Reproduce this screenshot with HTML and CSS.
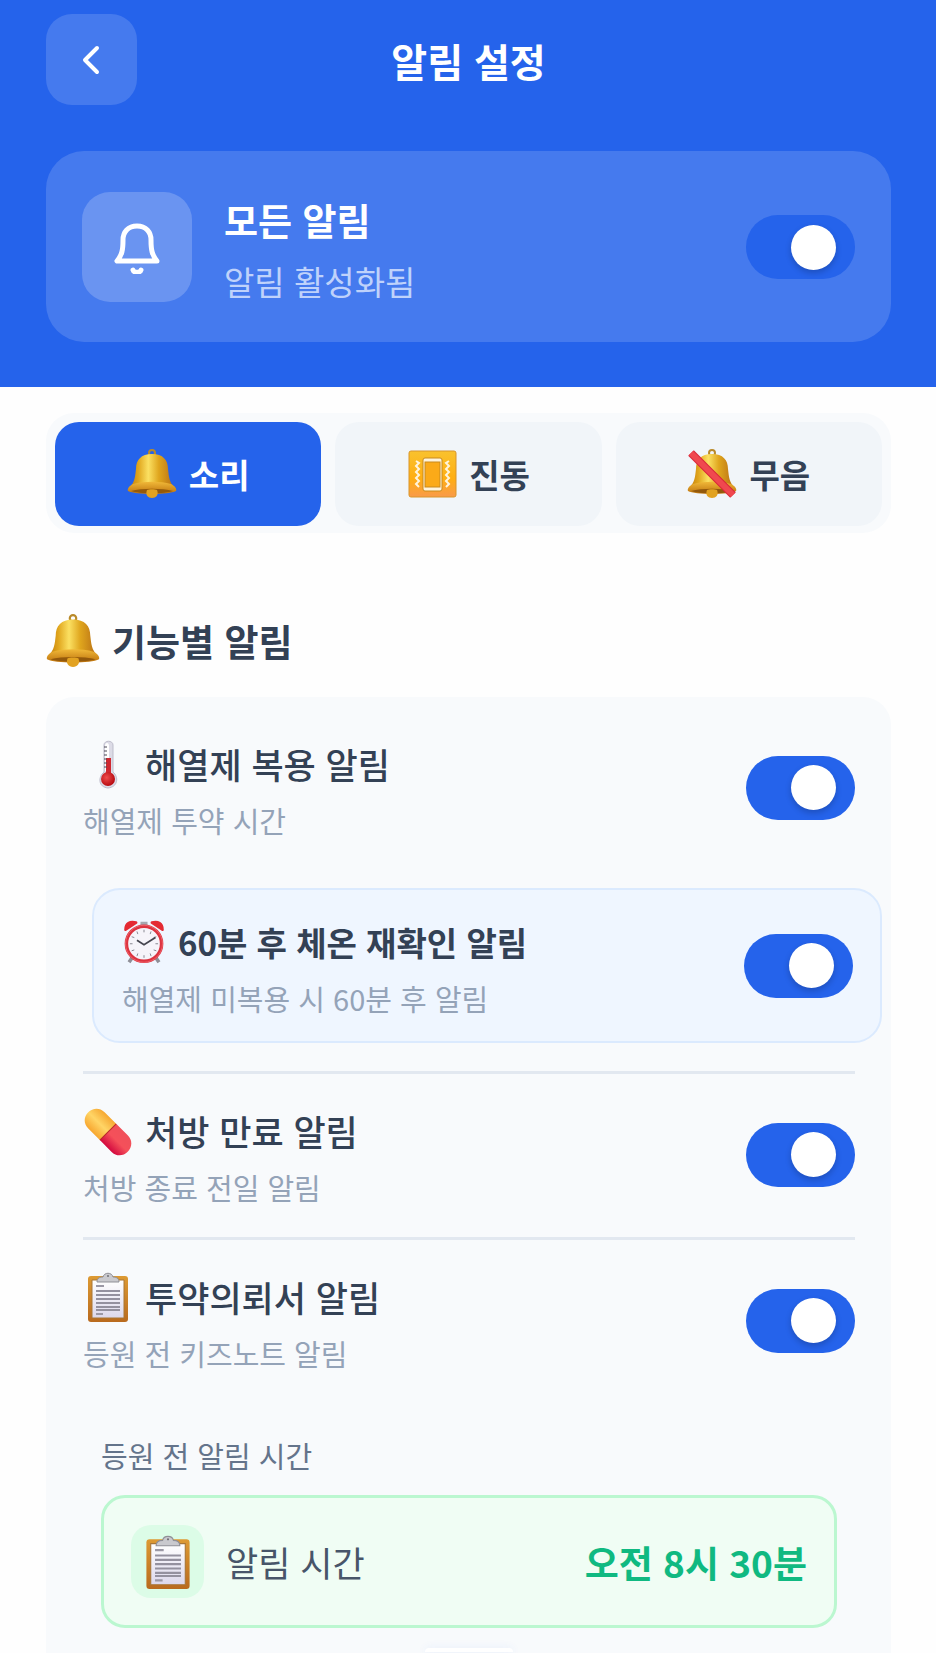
FILE: index.html
```
<!DOCTYPE html>
<html lang="ko">
<head>
  <meta charset="UTF-8">
  <meta name="viewport" content="width=device-width, initial-scale=1.0">
  <title>알림 설정</title>
  <link rel="stylesheet" href="styles.css">
</head>
<body>
  <!-- 아이콘 모음 -->
  <svg class="sprite" aria-hidden="true">
    <defs>
      <linearGradient id="gold" x1="0" x2="1" y1="0" y2="0">
        <stop offset="0" stop-color="#c17c0c"/>
        <stop offset="0.2" stop-color="#e0a51c"/>
        <stop offset="0.42" stop-color="#fbe062"/>
        <stop offset="0.65" stop-color="#dfa51d"/>
        <stop offset="1" stop-color="#b56b14"/>
      </linearGradient>
      <linearGradient id="goldRim" x1="0" x2="0" y1="0" y2="1">
        <stop offset="0" stop-color="#f0b838"/>
        <stop offset="1" stop-color="#bd720d"/>
      </linearGradient>
      <linearGradient id="amber" x1="0" x2="0" y1="0" y2="1">
        <stop offset="0" stop-color="#f9c22e"/>
        <stop offset="0.6" stop-color="#ffae12"/>
        <stop offset="1" stop-color="#f99a4a"/>
      </linearGradient>
      <linearGradient id="pillTop" x1="0" x2="1" y1="0" y2="0">
        <stop offset="0" stop-color="#f7a62f"/>
        <stop offset="0.5" stop-color="#ffd566"/>
        <stop offset="1" stop-color="#f6a832"/>
      </linearGradient>
      <linearGradient id="pillBottom" x1="0" x2="1" y1="0" y2="0">
        <stop offset="0" stop-color="#d3093f"/>
        <stop offset="0.5" stop-color="#f5505a"/>
        <stop offset="1" stop-color="#f0505a"/>
      </linearGradient>
      <linearGradient id="board" x1="0" x2="0" y1="0" y2="1">
        <stop offset="0" stop-color="#dd9a33"/>
        <stop offset="1" stop-color="#b96a1e"/>
      </linearGradient>
      <linearGradient id="paper" x1="0" x2="0" y1="0" y2="1">
        <stop offset="0" stop-color="#ffffff"/>
        <stop offset="1" stop-color="#dcd8ec"/>
      </linearGradient>
      <radialGradient id="bulb" cx="0.4" cy="0.4" r="0.6">
        <stop offset="0" stop-color="#f04c4c"/>
        <stop offset="1" stop-color="#b80c12"/>
      </radialGradient>
    </defs>

    <symbol id="bell" viewBox="0 0 50 50">
      <circle cx="25" cy="4" r="3" fill="none" stroke="#b98a2a" stroke-width="2"/>
      <path d="M25 5C14 5 9 11 9 20C8 28 8 33 2 39H48C42 33 42 28 41 20C41 11 36 5 25 5Z" fill="url(#gold)"/>
      <path d="M6 35C17 32 33 32 44 35C48 37 50 40 49 42C42 46 8 46 1 42C0 40 2 37 6 35Z" fill="url(#goldRim)"/>
      <path d="M4 42C15 39 35 39 46 42C38 45 12 45 4 42Z" fill="#93590c"/>
      <path d="M20 41C22 40 28 40 30 41C32 46 29 49 25 49C21 49 18 46 20 41Z" fill="#e2a221"/>
    </symbol>

    <symbol id="bell-off" viewBox="0 0 50 50">
      <use href="#bell"/>
      <path d="M4 4L46 46" stroke="#d92638" stroke-width="8"/>
      <path d="M4 4L46 46" stroke="#f0484f" stroke-width="6"/>
    </symbol>

    <symbol id="vibrate" viewBox="0 0 50 50">
      <rect x="2" y="2" width="47" height="46" rx="2" fill="url(#amber)" stroke="#d9952a"/>
      <rect x="16" y="9" width="19" height="33" rx="2" fill="#fff4dc" stroke="#c98a1c"/>
      <rect x="18" y="13" width="15" height="25" fill="#fbaa18" stroke="#c98a1c"/>
      <path d="M9 12L12 14L9 17L12 20L9 23L12 26L9 29L12 32L9 35L12 38M42 12L39 14L42 17L39 20L42 23L39 26L42 29L39 32L42 35L39 38" fill="none" stroke="#fff4dc" stroke-width="2"/>
    </symbol>

    <symbol id="thermometer" viewBox="0 0 50 50">
      <path d="M21 6C21 1 30 1 30 6V33C36 38 35 48 25 49C15 48 15 38 21 33Z" fill="#dcdbe6" stroke="#bdbccb"/>
      <path d="M22 7C22 3 26 3 26 7V32H22Z" fill="#ffffff"/>
      <rect x="23" y="19" width="5" height="18" fill="#cf2830"/>
      <circle cx="25" cy="40" r="7" fill="url(#bulb)"/>
      <path d="M21 8H24M21 12H24M21 16H24M21 20H24M21 24H24M21 28H24" stroke="#4b4b57"/>
    </symbol>

    <symbol id="clock" viewBox="0 0 50 50">
      <path d="M12 42L8 48M38 42L42 48" stroke="#8f8f98" stroke-width="4"/>
      <path d="M21 2H29V8H21Z" fill="#a5a8b0"/>
      <path d="M4 11C4 4 9 1 16 3Z" fill="#e42a33" stroke="#e42a33" stroke-width="3" stroke-linejoin="round"/>
      <path d="M46 11C46 4 41 1 34 3Z" fill="#e42a33" stroke="#e42a33" stroke-width="3" stroke-linejoin="round"/>
      <circle cx="25" cy="27" r="20" fill="#f6f4fa" stroke="#dc3340" stroke-width="4"/>
      <circle cx="25" cy="27" r="21" fill="none" stroke="#f0686e"/>
      <path d="M25 11V14M25 40V43M9 27H12M38 27H41M17 13L18 16M33 13L32 16M11 19L14 20M39 19L36 20M11 35L14 34M39 35L36 34M17 41L18 38M33 41L32 38" stroke="#7b7b86"/>
      <path d="M17 23L25 28L38 20" fill="none" stroke="#45454f" stroke-width="2"/>
    </symbol>

    <symbol id="pill" viewBox="-1 -2 52 52">
      <g transform="rotate(-45 25 25)">
        <path d="M13 25V8C13 -8 37 -8 37 8V25Z" fill="url(#pillTop)"/>
        <path d="M13 25V42C13 58 37 58 37 42V25Z" fill="url(#pillBottom)"/>
        <path d="M13 25H37" stroke="#b82a25"/>
      </g>
    </symbol>

    <symbol id="clipboard" viewBox="0 0 50 50">
      <rect x="5" y="4" width="40" height="46" rx="3" fill="url(#board)"/>
      <path d="M9 8H41V46H9Z" fill="url(#paper)" stroke="#a87636"/>
      <path d="M13 14H21M13 42H20" stroke="#9b98a5" stroke-width="2"/>
      <path d="M13 19H37M13 23H37M13 27H37M13 31H37M13 35H37M13 38H37" stroke="#94919f" stroke-width="2"/>
      <path d="M14 10C14 6 17 5 20 5C21 0 29 0 30 5C33 5 36 6 36 10Z" fill="#c9c9ce" stroke="#8f8f96"/>
      <circle cx="25" cy="4" r="1" fill="#6f6f76"/>
    </symbol>
  </svg>

  <header class="header">
    <div class="title-bar">
      <button class="back-btn" type="button" aria-label="뒤로">
        <svg viewBox="0 0 24 40" width="24" height="40"><path d="M17 8L5 20L17 32"/></svg>
      </button>
      <h1>알림 설정</h1>
    </div>

    <div class="master-card">
      <div class="master-icon">
        <svg viewBox="0 0 48 54" width="48" height="54"><path d="M24 6C15 6 10 12 10 20C10 30 9 35 4 41H44C39 35 38 30 38 20C38 12 33 6 24 6ZM20 50C21 53 27 53 28 50"/></svg>
      </div>
      <label class="text" for="all">
        <span class="master-name">모든 알림</span>
        <span class="master-state">알림 활성화됨</span>
      </label>
      <input class="toggle" id="all" type="checkbox" checked>
    </div>
  </header>

  <main>
    <div class="tabs">
      <button class="tab active" type="button"><svg class="emoji"><use href="#bell"/></svg>소리</button>
      <button class="tab" type="button"><svg class="emoji"><use href="#vibrate"/></svg>진동</button>
      <button class="tab" type="button"><svg class="emoji"><use href="#bell-off"/></svg>무음</button>
    </div>

    <h2><svg class="emoji"><use href="#bell"/></svg>기능별 알림</h2>

    <section class="panel">
      <div class="row">
        <label class="text" for="fever">
          <span class="name"><svg class="emoji"><use href="#thermometer"/></svg>해열제 복용 알림</span>
          <span class="desc">해열제 투약 시간</span>
        </label>
        <input class="toggle" id="fever" type="checkbox" checked>
      </div>

      <div class="sub-card">
        <label class="text" for="recheck">
          <span class="name"><svg class="emoji"><use href="#clock"/></svg>60분 후 체온 재확인 알림</span>
          <span class="desc">해열제 미복용 시 60분 후 알림</span>
        </label>
        <input class="toggle" id="recheck" type="checkbox" checked>
      </div>

      <div class="row line">
        <label class="text" for="expire">
          <span class="name"><svg class="emoji"><use href="#pill"/></svg>처방 만료 알림</span>
          <span class="desc">처방 종료 전일 알림</span>
        </label>
        <input class="toggle" id="expire" type="checkbox" checked>
      </div>

      <div class="row line">
        <label class="text" for="request">
          <span class="name"><svg class="emoji"><use href="#clipboard"/></svg>투약의뢰서 알림</span>
          <span class="desc">등원 전 키즈노트 알림</span>
        </label>
        <input class="toggle" id="request" type="checkbox" checked>
      </div>

      <div class="time">
        <p class="time-label">등원 전 알림 시간</p>
        <button class="time-card" type="button">
          <span class="time-icon"><svg class="emoji"><use href="#clipboard"/></svg></span>
          <span class="time-name">알림 시간</span>
          <span class="time-value">오전 8시 30분</span>
        </button>
      </div>
      <div class="handle"></div>
    </section>
  </main>
</body>
</html>
```
FILE: styles.css
```
* {
  box-sizing: border-box;
}
body {
  margin: 0;
  min-height: 100vh;
  display: flex;
  flex-direction: column;
  background-color: #fefefe;
  color: #334155;
  font-family: "Noto Sans CJK KR", sans-serif;
}
h1, h2, p {
  margin: 0;
}
button {
  border: none;
  padding: 0;
  font-family: inherit;
  color: inherit;
  cursor: pointer;
}
.sprite {
  position: absolute;
  width: 0;
  height: 0;
}
.emoji {
  width: 50px;
  height: 50px;
  flex: none;
}

/* 상단 */
.header {
  background-color: #2563eb;
  color: white;
  padding: 14px 45px 45px 46px;
}
.title-bar {
  display: grid;
  grid-template-columns: 91px 1fr 91px;
  align-items: center;
  margin-bottom: 46px;
}
.title-bar h1 {
  font-size: 39px;
  line-height: 60px;
  text-align: center;
}
.back-btn {
  height: 91px;
  border-radius: 26px;
  background-color: rgba(255, 255, 255, 0.15);
  display: flex;
  align-items: center;
  justify-content: center;
}
.header svg {
  fill: none;
  stroke: white;
  stroke-width: 4px;
  stroke-linecap: round;
  stroke-linejoin: round;
}
.master-card {
  display: flex;
  align-items: center;
  gap: 32px;
  padding: 41px 36px 40px;
  border-radius: 38px;
  background-color: rgba(255, 255, 255, 0.15);
}
.master-icon {
  width: 110px;
  height: 110px;
  border-radius: 28px;
  background-color: rgba(255, 255, 255, 0.2);
  display: flex;
  align-items: center;
  justify-content: center;
}
.master-icon svg {
  stroke-width: 5px;
}
.text {
  flex: 1;
  display: flex;
  flex-direction: column;
}
.master-name {
  font-size: 37px;
  font-weight: bold;
  line-height: 54px;
}
.master-state {
  font-size: 33px;
  line-height: 40px;
  margin-top: 14px;
  color: #bfd2fb;
}

/* 스위치 */
.toggle {
  appearance: none;
  flex: none;
  width: 109px;
  height: 64px;
  margin: 0;
  padding: 0 19px;
  border-radius: 32px;
  background-color: #cbd5e1;
  display: flex;
  align-items: center;
  cursor: pointer;
}
.toggle::before {
  content: "";
  width: 45px;
  height: 45px;
  border-radius: 50%;
  background-color: white;
  box-shadow: 0 3px 6px rgba(0, 0, 0, 0.2);
}
.toggle:checked {
  background-color: #2563eb;
  justify-content: flex-end;
}

/* 본문 */
main {
  flex: 1;
  display: flex;
  flex-direction: column;
  padding: 26px 45px 0 46px;
}
.tabs {
  display: grid;
  grid-template-columns: repeat(3, 1fr);
  gap: 14px;
  padding: 9px 9px 7px;
  border-radius: 28px;
  background-color: #f8fafc;
}
.tab {
  height: 104px;
  border-radius: 24px;
  background-color: #f1f5f9;
  font-size: 33px;
  font-weight: bold;
  display: flex;
  align-items: center;
  justify-content: center;
  gap: 12px;
}
.tab.active {
  background-color: #2563eb;
  color: white;
}
h2 {
  display: flex;
  align-items: center;
  gap: 12px;
  margin: 81px 0 29px;
  font-size: 37px;
  line-height: 50px;
}
h2 .emoji {
  width: 54px;
  height: 54px;
}
.panel {
  flex: 1;
  padding: 10px 36px 0 37px;
  border-radius: 28px 28px 0 0;
  background-color: #f8fafc;
}
.row {
  display: flex;
  align-items: center;
  padding: 30px 0 32px;
}
.row.line {
  border-top: 3px solid #e2e8f0;
}
.name {
  display: flex;
  align-items: center;
  gap: 12px;
  font-size: 35px;
  font-weight: 500;
  line-height: 54px;
}
.desc {
  margin-top: 11px;
  font-size: 29px;
  line-height: 36px;
  color: #94a3b8;
}
.sub-card {
  display: flex;
  align-items: center;
  margin: 18px -27px 28px 9px;
  padding: 25px 27px 25px 28px;
  border: 2px solid #dbeafe;
  border-radius: 28px;
  background-color: #eff6ff;
}
.sub-card .name {
  font-size: 33px;
  font-weight: bold;
}
.sub-card .emoji {
  width: 44px;
  height: 44px;
}

/* 알림 시간 */
.time {
  margin: 34px 18px 20px;
}
.time-label {
  margin-bottom: 22px;
  font-size: 29px;
  line-height: 36px;
  color: #64748b;
}
.time-card {
  width: 100%;
  display: flex;
  align-items: center;
  gap: 22px;
  padding: 27px;
  border: 3px solid #bbf7d0;
  border-radius: 24px;
  background-color: #f0fdf4;
}
.time-icon {
  width: 73px;
  height: 73px;
  border-radius: 20px;
  background-color: #dcfce7;
  display: flex;
  align-items: center;
  justify-content: center;
}
.time-icon .emoji {
  width: 54px;
  height: 54px;
}
.time-name {
  flex: 1;
  text-align: left;
  font-size: 35px;
  color: #475569;
}
.time-value {
  font-size: 37px;
  font-weight: bold;
  color: #10b981;
}
.handle {
  width: 88px;
  height: 4px;
  margin: 0 auto;
  border-radius: 20px 20px 0 0;
  background-color: white;
  box-shadow: 0 0 8px rgba(37, 99, 235, 0.1);
}
```
